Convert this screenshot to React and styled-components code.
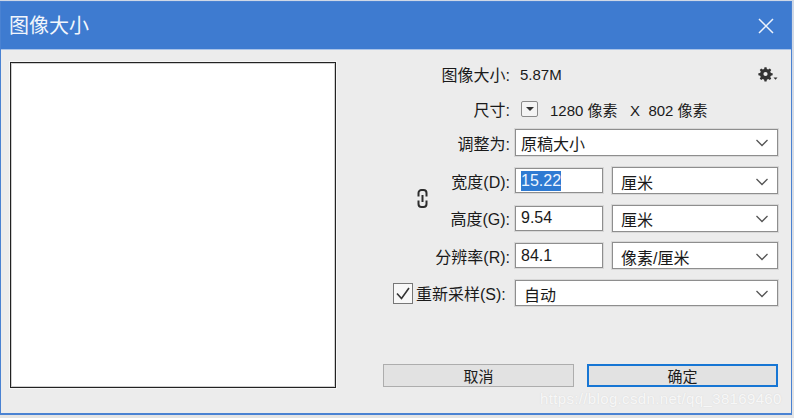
import React from "react";
import styled, { createGlobalStyle } from "styled-components";

const Global = createGlobalStyle`
  html, body { margin: 0; padding: 0; background: #dcdcdc; }
  body { width: 794px; height: 418px; overflow: hidden; font-family: "Liberation Sans", "Noto Sans CJK SC", sans-serif; color: #1a1a1a; }
`;
const Page = styled.div`
  width: 794px; height: 418px; box-sizing: border-box; padding: 1px 2px 3px 0; position: relative;
  background: linear-gradient(#cfd8e6, #e4e4e4);
`;
const Win = styled.div`
  height: 414px; box-sizing: border-box; border: 1px solid #4a82d2; border-bottom-width: 2px; background: #ececec;
  display: flex; flex-direction: column;
`;
const TitleBar = styled.div`
  flex: 0 0 47px; background: #3e7bd0; border-bottom: 1px solid #a9c3e8; display: flex; align-items: center; justify-content: space-between;
  padding: 0 16px 0 8px; color: #f2f6fc; font-size: 20px; line-height: 1;
`;
const Close = styled.svg` width: 18px; height: 18px; display: block; `;
const Body = styled.div` flex: 1; display: flex; padding: 11px 0 0 9px; `;
const Preview = styled.div`
  width: 326px; height: 326px; margin-top: 1px; box-sizing: border-box; background: #fff; border: 1px solid #222;
  box-shadow: inset 0 0 0 1px #cfcfcf, 0 0 0 1px #f6f6f6;
`;
const Panel = styled.div` margin-left: 47px; width: 395px; display: flex; flex-direction: column; font-size: 15px; `;
const Row = styled.div`
  display: flex; align-items: center; height: ${p => p.$h || 26}px; margin-top: ${p => p.$top || 0}px;
`;
const Label = styled.div`
  width: ${p => p.$w || 127}px; text-align: ${p => (p.$start ? "left" : "right")}; white-space: nowrap; margin-right: 5px; flex: none; font-size: 16px;
`;
const Val = styled.div` white-space: nowrap; margin-left: ${p => p.$left || 0}px; flex: ${p => (p.$grow ? 1 : "none")}; `;
const Gear = styled.svg` width: 20px; height: 15px; flex: none; display: block; `;
const Drop = styled.div`
  width: 17px; height: 16px; box-sizing: border-box; margin: 0 12px 0 6px; border: 1px solid #8a8a8a; border-radius: 2px; background: #f4f4f4;
  display: flex; align-items: center; justify-content: center; flex: none;
  &::after { content: ""; border: 4px solid transparent; border-top: 4px solid #333; border-bottom: 0; }
`;
const Select = styled.div`
  box-sizing: border-box; width: ${p => p.$w}px; height: ${p => p.$h || 27}px; flex: none; margin-left: ${p => p.$left || 0}px;
  border: 1px solid #8e8e8e; background: #fff; display: flex; align-items: center; justify-content: space-between;
  padding: ${p => (p.$low ? "2px" : "0")} 8px 0 ${p => p.$pad || 7}px; font-size: 16px; outline: 1px solid #d8d8d8;
`;
const Chevron = styled.svg` width: 14px; height: 8px; display: block; flex: none; `;
const Input = styled.div`
  box-sizing: border-box; width: 88px; height: 25px; flex: none; border: 1px solid #8e8e8e; background: #fff; outline: 1px solid #d8d8d8;
  display: flex; align-items: center; padding-left: 5px; font-size: 16px;
`;
const Selected = styled.span` background: #2e7ad2; color: #eef5ff; line-height: 20px; `;
const DimGroup = styled.div` display: flex; align-items: flex-start; margin-top: 11px; `;
const LinkCol = styled.div` width: 42px; flex: none; padding: 22px 0 0 34px; box-sizing: border-box; `;
const LinkIcon = styled.svg` width: 11px; height: 19px; display: block; `;
const DimRows = styled.div` display: flex; flex-direction: column; gap: 10.5px; `;
const Check = styled.div`
  box-sizing: border-box; width: 20px; height: 21px; border: 1px solid #777; background: #f8f8f8; margin: 0 3px 0 10px; flex: none;
  display: flex; align-items: center; justify-content: center;
`;
const CheckMark = styled.svg` width: 16px; height: 15px; display: block; `;
const Buttons = styled.div` display: flex; gap: 13px; margin-top: 58px; `;
const Btn = styled.div`
  box-sizing: border-box; width: 191px; height: 23px; background: #e2e2e2; border: ${p => (p.$primary ? "2px solid #1776d4" : "1px solid #adadad")};
  display: flex; align-items: center; justify-content: center; font-size: 15px; color: #1c1c1c;
`;
const Watermark = styled.div`
  position: absolute; left: 540px; top: 390px; font-size: 15px; color: rgba(255,255,255,0.82); letter-spacing: 0.35px; white-space: nowrap;
  text-shadow: 0 0 1px rgba(190,190,190,.5);
`;

const Chev = () => (
  <Chevron viewBox="0 0 14 8"><path d="M1.5 1l5.5 5.5L12.500 1" fill="none" stroke="#555" strokeWidth="1.300" /></Chevron>
);

export default function App() {
  return (
    <Page>
      <Global />
      <Win>
        <TitleBar>
          图像大小
          <Close viewBox="0 0 18 18"><path d="M2 2l14 14M16 2L2 16" stroke="#eef3fb" strokeWidth="1.500" /></Close>
        </TitleBar>
        <Body>
          <Preview />
          <Panel>
            <Row>
              <Label>图像大小:</Label>
              <Val $grow $left={5}>5.87M</Val>
              <Gear viewBox="0 0 20 15">
                <g transform="translate(7.500 7) scale(1.050)">
                  <path d="M-1 -6.500h2l.3 1.700 1.300.6 1.500-1 1.400 1.400-1 1.500.6 1.300 1.700.3v2l-1.700.3-.6 1.300 1 1.500-1.400 1.400-1.500-1-1.300.6-.3 1.700h-2l-.3-1.700-1.300-.6-1.500 1-1.400-1.400 1-1.500-.6-1.300-1.700-.3v-2l1.700-.3.6-1.300-1-1.500 1.400-1.400 1.500 1 1.300-.6z" fill="#333" />
                  <circle r="2" fill="#ececec" />
                </g>
                <path d="M15.500 10.500h4l-2 2.200z" fill="#333" />
              </Gear>
            </Row>
            <Row $top={9}>
              <Label>尺寸:</Label>
              <Drop />
              <Val>1280 像素&nbsp;&nbsp;&nbsp;X&nbsp;&nbsp;802 像素</Val>
            </Row>
            <Row $h={27} $top={7}>
              <Label>调整为:</Label>
              <Select $w={263} $pad={5}>原稿大小<Chev /></Select>
            </Row>
            <DimGroup>
              <LinkCol>
                <LinkIcon viewBox="0 0 11 19">
                  <path d="M1.500 7.500V4a3 3 0 0 1 3-3h2a3 3 0 0 1 3 3v3.500M1.500 11.500V15a3 3 0 0 0 3 3h2a3 3 0 0 0 3-3v-3.500M5.500 6v7" fill="none" stroke="#2c2c2c" strokeWidth="2" />
                </LinkIcon>
              </LinkCol>
              <DimRows>
                <Row $h={27}>
                  <Label $w={85}>宽度(D):</Label>
                  <Input><Selected>15.22</Selected></Input>
                  <Select $w={166} $left={9} $pad={8} $low>厘米<Chev /></Select>
                </Row>
                <Row $h={27}>
                  <Label $w={85}>高度(G):</Label>
                  <Input>9.54</Input>
                  <Select $w={166} $left={9} $pad={8} $low>厘米<Chev /></Select>
                </Row>
                <Row $h={27}>
                  <Label $w={85}>分辨率(R):</Label>
                  <Input>84.1</Input>
                  <Select $w={166} $left={9} $pad={8} $low>像素/厘米<Chev /></Select>
                </Row>
              </DimRows>
            </DimGroup>
            <Row $h={26} $top={11}>
              <Check>
                <CheckMark viewBox="0 0 16 15"><path d="M2 7.500l4.500 5L14 2" fill="none" stroke="#333" strokeWidth="1.600" /></CheckMark>
              </Check>
              <Label $w={94} $start>重新采样(S):</Label>
              <Select $w={263} $h={26} $pad={8} $low>自动<Chev /></Select>
            </Row>
            <Buttons>
              <Btn>取消</Btn>
              <Btn $primary>确定</Btn>
            </Buttons>
          </Panel>
        </Body>
      </Win>
      <Watermark>https://blog.csdn.net/qq_38169460</Watermark>
    </Page>
  );
}
